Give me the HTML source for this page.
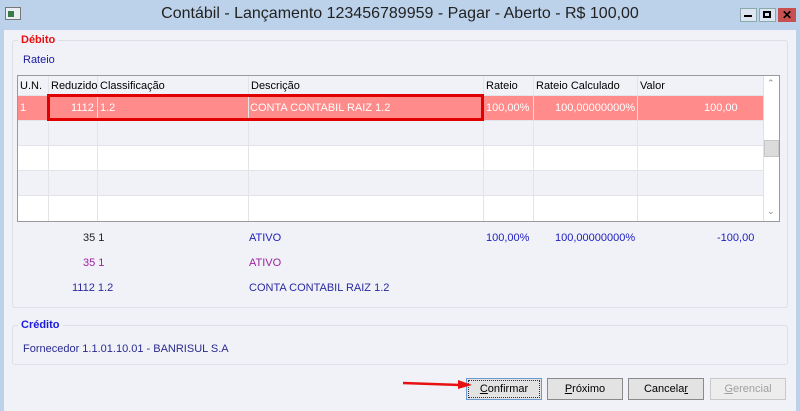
<!DOCTYPE html>
<html><head><meta charset="utf-8"><style>
*{margin:0;padding:0;box-sizing:border-box}
body{width:800px;height:411px;overflow:hidden;background:#bcd1ea;font-family:"Liberation Sans",sans-serif;font-size:11px;color:#000;position:relative}
.a{position:absolute;white-space:nowrap}
#client{position:absolute;left:4px;top:30px;width:792px;height:381px;background:#f1f2f8}
.grp{position:absolute;border:1px solid #dcdfe6;border-radius:3px}
.lg{position:absolute;background:#f1f2f8;padding:0 3px;font-weight:bold;font-size:11px}
.grid{position:absolute;left:17px;top:75px;width:763px;height:147px;border:1px solid #9a9a9a;background:#fff;overflow:hidden}
.hl{position:absolute;top:0;width:1px;height:147px;background:#e4e4e8}
.row{position:absolute;left:0;width:745px;height:25px;border-bottom:1px solid #e4e4e8}
.btn{position:absolute;top:378px;height:22px;width:76px;border:1px solid #8a8a8a;background:#e3e3e3;text-align:center;line-height:20px;font-size:11px}
</style></head><body>
<div class="a" style="left:5px;top:7px;width:16px;height:13px;border:1px solid #777;background:#e8eef2"><div style="position:absolute;left:2px;top:3px;width:6px;height:6px;background:#3a7a4a"></div></div>
<div class="a" style="left:0;width:800px;top:5px;text-align:center;font-size:16px;color:#222;font-family:'Liberation Sans',sans-serif">Contábil - Lançamento 123456789959 - Pagar - Aberto - R$ 100,00</div>
<div class="a" style="left:740px;top:8px;width:17px;height:14px;background:#dde6f0;border:1px solid #8aa"></div><div class="a" style="left:744px;top:15px;width:8px;height:2px;background:#000"></div>
<div class="a" style="left:759px;top:8px;width:17px;height:14px;background:#dde6f0;border:1px solid #8aa"></div><div class="a" style="left:763px;top:11px;width:8px;height:7px;border:2px solid #000"></div>
<div class="a" style="left:778px;top:8px;width:18px;height:14px;background:#c75050;color:#000;font-weight:bold;font-size:12px;text-align:center;line-height:14px">✕</div>
<div id="client"></div>
<div class="grp" style="left:12px;top:40px;width:776px;height:268px"></div>
<div class="lg" style="left:18px;top:34px;color:#e81010">Débito</div>
<div class="a" style="left:23px;top:54px;color:#1a1aa0">Rateio</div>
<div class="grid">
 <div style="position:absolute;left:0;top:0;width:745px;height:20px;background:#f1f2f8;border-bottom:1px solid #e4e4e8"></div>
 <div class="row" style="top:20px;background:#ff8b8b"></div>
 <div class="row" style="top:45px;background:#f1f2f8"></div>
 <div class="row" style="top:70px;background:#fff"></div>
 <div class="row" style="top:95px;background:#f1f2f8"></div>
 <div class="row" style="top:120px;background:#fff;border:none"></div>
 <div class="hl" style="left:30px"></div><div class="hl" style="left:79px"></div><div class="hl" style="left:230px"></div><div class="hl" style="left:465px"></div><div class="hl" style="left:515px"></div><div class="hl" style="left:619px"></div>
 <div style="position:absolute;left:745px;top:0;width:17px;height:147px;background:#fff;border-left:1px solid #e0e0e0"></div>
 <div class="a" style="left:749px;top:2px;color:#888;font-size:9px">⌃</div>
 <div style="position:absolute;left:746px;top:64px;width:15px;height:17px;background:#dcdcdc;border:1px solid #c8c8c8"></div>
 <div class="a" style="left:749px;top:130px;color:#888;font-size:9px">⌄</div>
 <div class="a" style="left:2px;top:4px">U.N.</div><div class="a" style="left:33px;top:4px">Reduzido</div><div class="a" style="left:82px;top:4px">Classificação</div><div class="a" style="left:233px;top:4px">Descrição</div><div class="a" style="left:468px;top:4px">Rateio</div><div class="a" style="left:518px;top:4px">Rateio Calculado</div><div class="a" style="left:622px;top:4px">Valor</div>
 <div class="a" style="left:2px;top:26px;color:#fff">1</div><div class="a" style="left:53px;top:26px;color:#fff">1112</div><div class="a" style="left:82px;top:26px;color:#fff">1.2</div><div class="a" style="left:232px;top:26px;color:#fff">CONTA CONTABIL RAIZ 1.2</div><div class="a" style="left:468px;top:26px;color:#fff">100,00%</div><div class="a" style="left:537px;top:26px;color:#fff">100,00000000%</div><div class="a" style="left:686px;top:26px;color:#fff">100,00</div>
</div>
<div class="a" style="left:47px;top:94px;width:437px;height:27px;border:3px solid #e00000"></div>
<div class="a" style="left:83px;top:232px;color:#222">35 1</div><div class="a" style="left:249px;top:232px;color:#2020c0">ATIVO</div><div class="a" style="left:486px;top:232px;color:#2020c0">100,00%</div><div class="a" style="left:555px;top:232px;color:#2020c0">100,00000000%</div><div class="a" style="left:717px;top:232px;color:#2020c0">-100,00</div>
<div class="a" style="left:83px;top:257px;color:#a020a0">35 1</div><div class="a" style="left:249px;top:257px;color:#a020a0">ATIVO</div>
<div class="a" style="left:72px;top:282px;color:#2a2aa0">1112 1.2</div><div class="a" style="left:249px;top:282px;color:#2a2aa0">CONTA CONTABIL RAIZ 1.2</div>
<div class="grp" style="left:12px;top:325px;width:776px;height:40px"></div>
<div class="lg" style="left:18px;top:319px;color:#1a1ae0">Crédito</div>
<div class="a" style="left:23px;top:343px;color:#2a2a90">Fornecedor 1.1.01.10.01 - BANRISUL S.A</div>
<div class="btn" style="left:466px;border-color:#6a9ad0;outline:1px dotted #333;outline-offset:-3px"><u>C</u>onfirmar</div>
<div class="btn" style="left:547px"><u>P</u>róximo</div>
<div class="btn" style="left:628px">Cancela<u>r</u></div>
<div class="btn" style="left:710px;color:#a0a0a0;border-color:#c8c8c8;background:#ededed"><u>G</u>erencial</div>
<svg class="a" style="left:400px;top:378px" width="80" height="14"><line x1="3" y1="5" x2="60" y2="7" stroke="#e81010" stroke-width="2.5"/><polygon points="58,2 72,7 58,11" fill="#e81010"/></svg>
</body></html>
